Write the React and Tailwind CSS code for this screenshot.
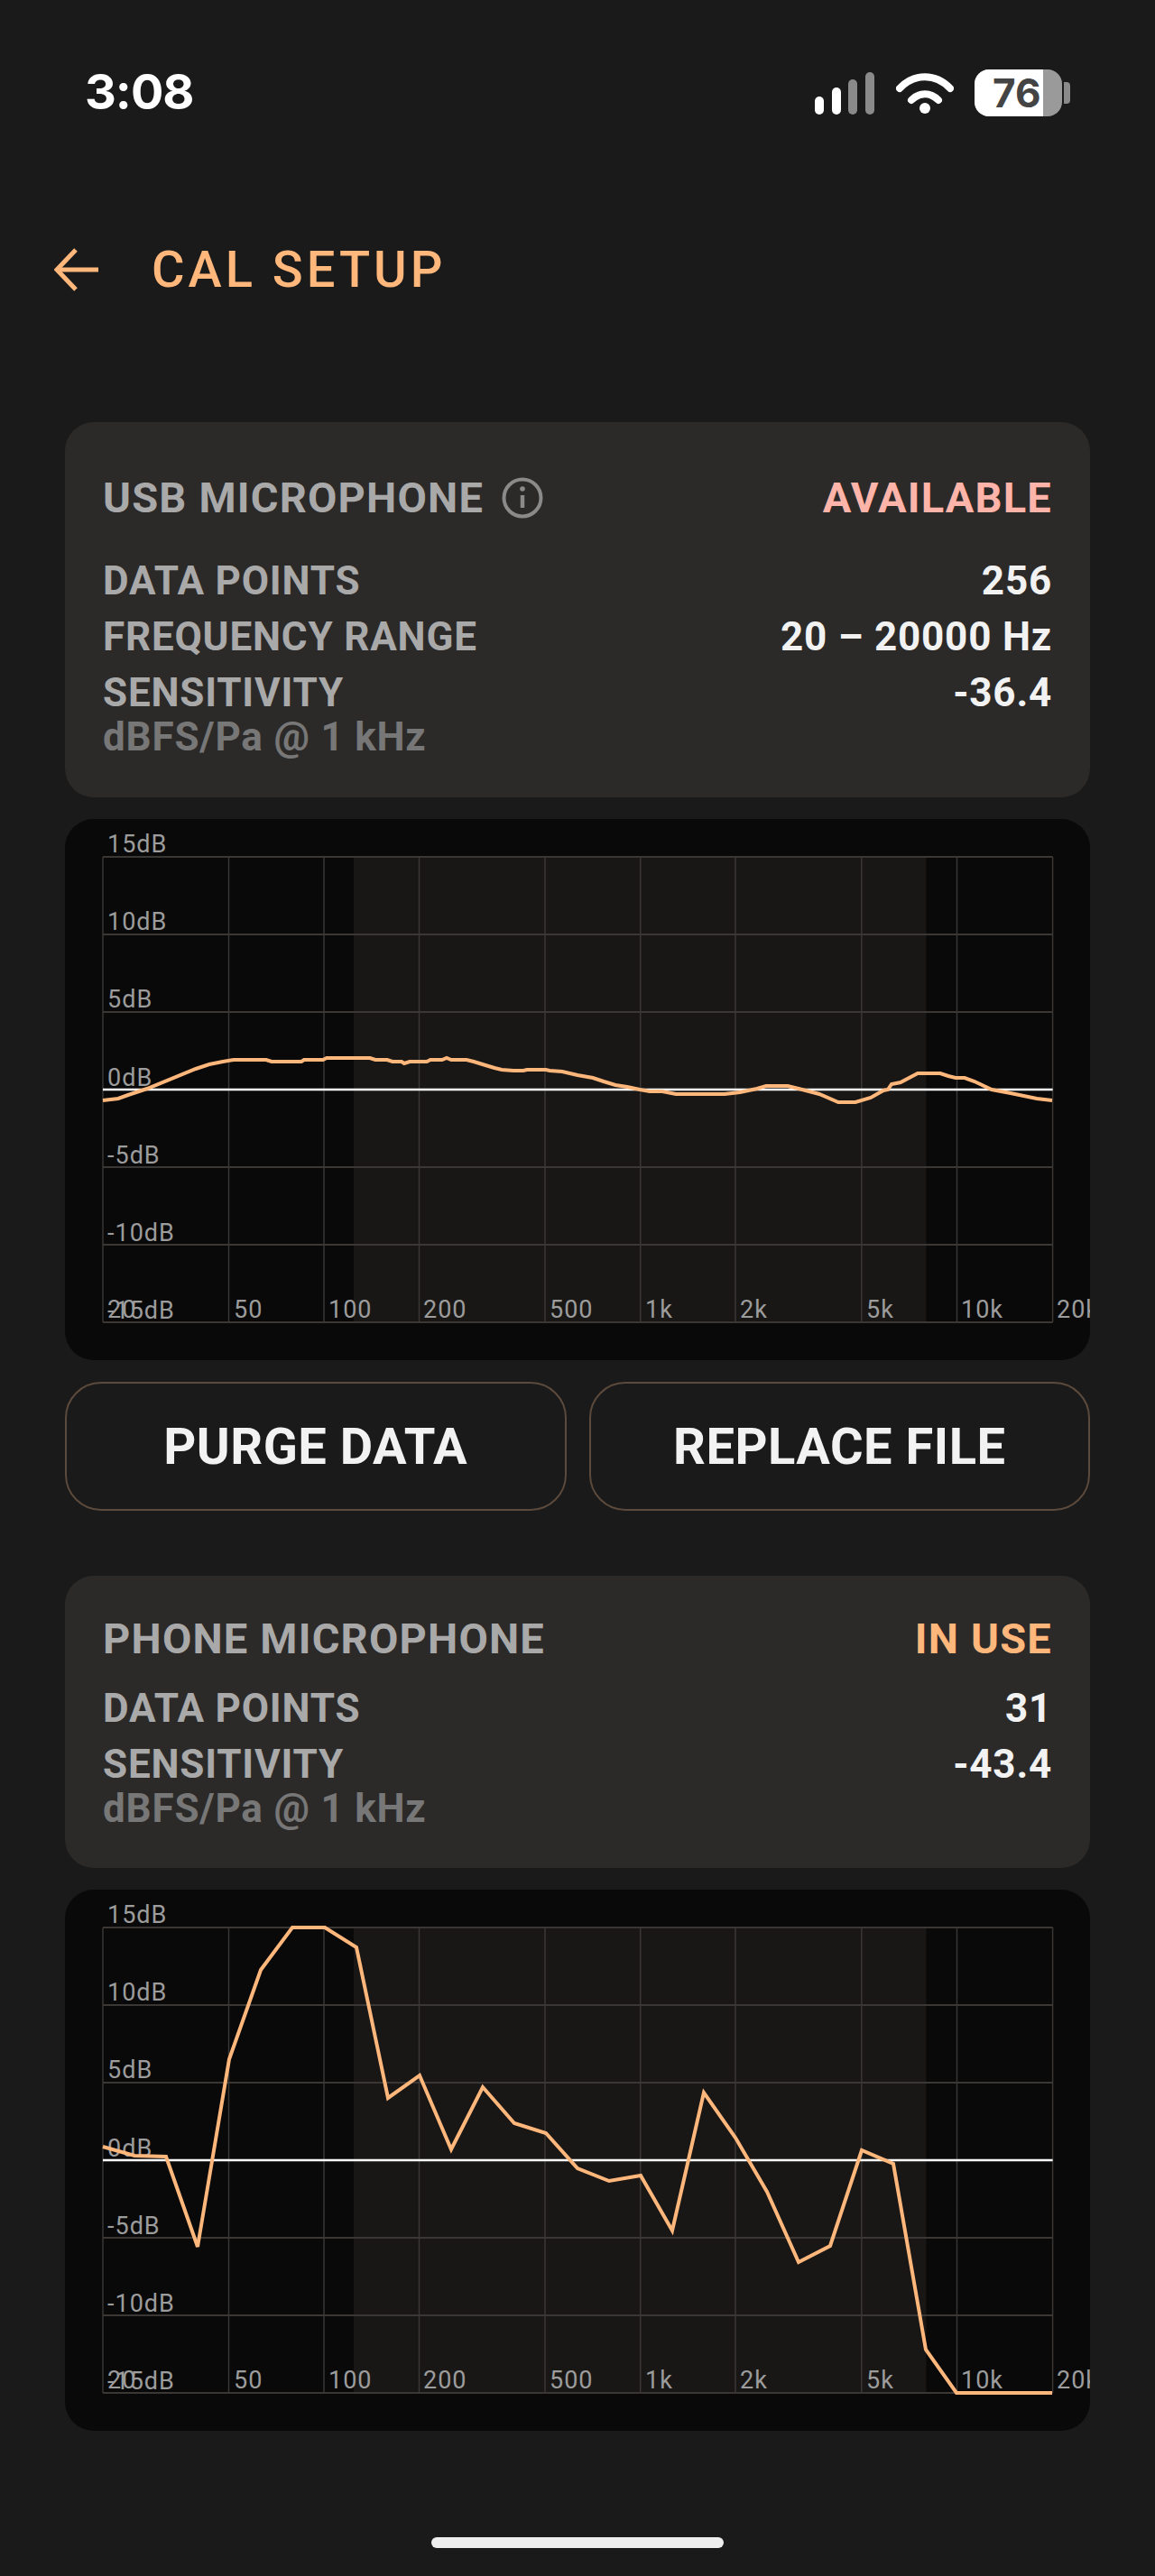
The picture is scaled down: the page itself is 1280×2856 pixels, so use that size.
const ORANGE='#ffb77c'

// dB grid: 6 rows of 86px, log x axis 20Hz..20kHz
const xLines=[0,139.5,245,350.5,490,595.7,701,840.8,946.5,1052.6]
const yLines=[0,86,172,344,430,516]
const yLabels=[
['15dB',-5],['10dB',81],['5dB',167],['0dB',254],['-5dB',340],['-10dB',426],['-15dB',512]
]
const xLabels=[
['20',5],['50',145],['100',250],['200',355],['500',495],['1k',601],['2k',706],['5k',846],['10k',951],['20k',1057]
]

const usbCurve=`0,270 17,268 28,264 49,257 103,235 118,230 133,227 145,225 181,225 187,227 220,227 223,225 244,225 248,223 296,223 302,225 315,225 321,227 331,227 334,229 340,227 359,227 363,225 376,225 381,223 386,225 403,225 411,227 424,231 434,234 442,236 455,237 466,237 470,236 491,236 495,237 509,238 526,242 543,245 555,249 568,253 581,255 595,258 606,260 620,260 635,263 689,263 706,261 725,257 735,254 759,254 775,258 794,263 815,272 834,272 851,267 865,259 870,258 874,252 884,250 903,240 928,240 937,243 945,245 955,245 966,249 985,258 1006,262 1035,268 1052,270`

const phoneCurve=`0,243 35,253 70,254 105,354 140,146 175,47 210,0 246,0 281,22 316,189 351,164 386,246 421,177 456,217 491,228 526,267 561,281 596,275 631,336 666,183 701,233 736,293 771,371 806,353 841,247 876,262 912,468 946,516 982,516 1017,516 1052,516`

function Chart({curve}){
return(
<div className="mt-[24px] h-[600px] overflow-hidden rounded-[32px] bg-[#090909]">
<svg width="1136" height="600" viewBox="-42 -42 1136 600" className="block font-['Roboto',sans-serif]">
<rect x="278" y="0" width="634.5" height="516" fill="#191715"/>
{xLines.map(x=>(
<line key={x} x1={x} x2={x} y1="0" y2="516" stroke="#3a3734" strokeWidth="1.5"/>
))}
{yLines.map(y=>(
<line key={y} x1="0" x2="1052.6" y1={y} y2={y} stroke="#3a3734" strokeWidth="2"/>
))}
{yLabels.map(([t,y])=>(
<text key={t} x="5" y={y} fontSize="27" letterSpacing="1" fill="#9c9c9c">{t}</text>
))}
{xLabels.map(([t,x])=>(
<text key={t} x={x} y="511" fontSize="27" letterSpacing="1" fill="#9c9c9c">{t}</text>
))}
<line x1="0" x2="1052.6" y1="258" y2="258" stroke="#fff" strokeWidth="2.5"/>
<polyline points={curve} fill="none" stroke={ORANGE} strokeWidth="4" strokeLinejoin="miter"/>
</svg>
</div>
)
}

function Row({label,value}){
return(
<div className="flex h-[62px] items-center justify-between">
<span className="text-[#a9a9a9]">{label}</span>
<span className="text-[#f2f2f2]">{value}</span>
</div>
)
}

function InfoCard({title,info,status,statusColor,rows,height,top,gap}){
return(
<div className={`rounded-[32px] bg-[#2c2a29] px-[42px] text-[44px] font-bold tracking-[0.8px] ${height} ${top}`}>
<div className="flex items-center justify-between text-[47px] leading-[76px] tracking-[1.2px]">
<div className="flex items-center gap-[20px] text-[#a9a9a9]">
{title}
{info&&(
<svg width="46" height="46" viewBox="0 0 46 46" fill="none" stroke="#8a8a8a" strokeWidth="4">
<circle cx="23" cy="23" r="20.5"/>
<line x1="23" y1="20" x2="23" y2="34" strokeWidth="4.5"/>
<circle cx="23" cy="13" r="2.8" fill="#8a8a8a" stroke="none"/>
</svg>
)}
</div>
<span className={statusColor}>{status}</span>
</div>
<div className={gap}>
{rows.map(r=>(
<Row key={r[0]} label={r[0]} value={r[1]}/>
))}
</div>
<div className="mt-[-15px] text-[#777777]">dBFS/Pa @ 1 kHz</div>
</div>
)
}

export default function App(){
return(
<div className="h-[2856px] w-[1280px] overflow-hidden bg-[#1a1a1a] font-['Roboto',sans-serif]">

{/* status bar */}
<div className="flex h-[249px] items-start justify-between pl-[94px] pr-[94px] pt-[67px]">
<span className="font-['Inter',sans-serif] text-[54px] font-bold leading-[70px] tracking-[-1px] text-white">3:08</span>
<div className="mt-[-1px] flex items-start pt-[11px]">
<svg width="66" height="52" viewBox="0 0 66 52" fill="#fff">
<rect x="0" y="30" width="10" height="20" rx="5"/>
<rect x="19" y="20" width="10" height="30" rx="5"/>
<rect x="37" y="11" width="10" height="39" rx="5" fill="#8a8a8a"/>
<rect x="56" y="3" width="10" height="47" rx="5" fill="#8a8a8a"/>
</svg>
<svg width="64" height="52" viewBox="0 0 64 52" className="ml-[24px]" fill="none" stroke="#fff" strokeLinecap="round">
<path d="M4 21 C20 4 44 4 60 21" strokeWidth="8"/>
<path d="M17 34 C26 25 38 25 47 34" strokeWidth="8"/>
<circle cx="32" cy="43" r="6" fill="#fff" stroke="none"/>
</svg>
<div className="relative ml-[23px] h-[52px] w-[97px] overflow-hidden rounded-[16px] bg-[#9a9a9a]">
<div className="h-full w-[76px] bg-white"/>
<span className="absolute inset-y-0 left-[20px] flex items-center font-['Inter',sans-serif] text-[44px] font-bold leading-none text-[#444444]">76</span>
</div>
<div className="ml-[2px] mt-[14px] h-[24px] w-[7px] rounded-r-[4px] bg-[#8a8a8a]"/>
</div>
</div>

{/* header */}
<div className="flex h-[100px] items-center pl-[60px]">
<svg width="50" height="48" viewBox="0 0 50 48" fill="none" stroke={ORANGE} strokeWidth="5">
<path d="M24 2 L3 24 L24 46"/>
<path d="M3 24 H49"/>
</svg>
<span className="ml-[58px] text-[56px] font-medium tracking-[4px] text-[#ffb77c]">CAL SETUP</span>
</div>

<div className="px-[72px] pt-[119px]">

<InfoCard
title="USB MICROPHONE"
info
status="AVAILABLE"
statusColor="text-[#ffb4a9]"
height="h-[416px]"
top="pt-[46px]"
gap="mt-[23px]"
rows={[
['DATA POINTS','256'],
['FREQUENCY RANGE','20 – 20000 Hz'],
['SENSITIVITY','-36.4']
]}
/>

<Chart curve={usbCurve}/>

<div className="mt-[24px] grid grid-cols-2 gap-[25px]">
<button className="h-[143px] rounded-[40px] border-2 border-[#5c4a3c] text-[56px] font-bold tracking-[0.5px] text-[#f2f2f2]">PURGE DATA</button>
<button className="h-[143px] rounded-[40px] border-2 border-[#5c4a3c] text-[56px] font-bold tracking-[0.5px] text-[#f2f2f2]">REPLACE FILE</button>
</div>

<div className="mt-[72px]">
<InfoCard
title="PHONE MICROPHONE"
status="IN USE"
statusColor="text-[#ffb77c]"
height="h-[324px]"
top="pt-[32px]"
gap="mt-[8px]"
rows={[
['DATA POINTS','31'],
['SENSITIVITY','-43.4']
]}
/>
</div>

<Chart curve={phoneCurve}/>

</div>

{/* home indicator */}
<div className="mx-auto mt-[118px] h-[12px] w-[324px] rounded-[6px] bg-[#eeeeee]"/>

</div>
)
}
